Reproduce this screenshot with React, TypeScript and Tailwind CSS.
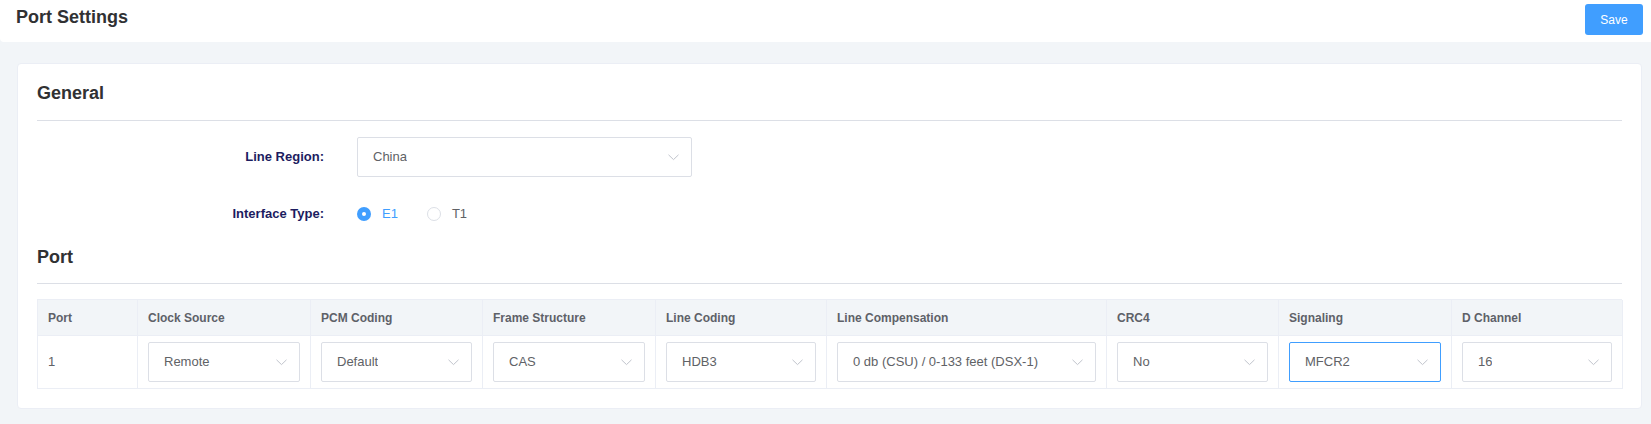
import React from 'react';

interface PortColumn {
  key: string;
  label: string;
  width: string;
  value?: string;
  focused?: boolean;
}

const columns: PortColumn[] = [
  { key: 'port', label: 'Port', width: 'w-[100px]' },
  { key: 'clock', label: 'Clock Source', width: 'w-[173px]', value: 'Remote' },
  { key: 'pcm', label: 'PCM Coding', width: 'w-[172px]', value: 'Default' },
  { key: 'frame', label: 'Frame Structure', width: 'w-[173px]', value: 'CAS' },
  { key: 'lineCoding', label: 'Line Coding', width: 'w-[171px]', value: 'HDB3' },
  { key: 'lineComp', label: 'Line Compensation', width: 'w-[280px]', value: '0 db (CSU) / 0-133 feet (DSX-1)' },
  { key: 'crc4', label: 'CRC4', width: 'w-[172px]', value: 'No' },
  { key: 'signaling', label: 'Signaling', width: 'w-[173px]', value: 'MFCR2', focused: true },
  { key: 'dchannel', label: 'D Channel', width: 'w-[171px]', value: '16' },
];

function Chevron() {
  return (
    <svg width="11" height="7" viewBox="0 0 11 7" className="shrink-0">
      <polyline points="0.5,0.8 5.5,5.6 10.5,0.8" fill="none" stroke="#c0c4cc" strokeWidth="1" />
    </svg>
  );
}

function SelectBox({ value, focused, className }: { value: string; focused?: boolean; className?: string }) {
  return (
    <div
      className={`h-[40px] flex items-center justify-between pl-[15px] pr-[12px] border rounded-[2px] bg-white text-[13px] text-[#606266] ${
        focused ? 'border-[#409eff]' : 'border-[#dcdfe6]'
      } ${className ?? ''}`}
    >
      <span className="truncate">{value}</span>
      <Chevron />
    </div>
  );
}

function Radio({ label, checked }: { label: string; checked?: boolean }) {
  return (
    <label className="flex items-center gap-[11px] text-[13px]">
      {checked ? (
        <span className="w-[14px] h-[14px] rounded-full bg-[#409eff] flex items-center justify-center">
          <span className="w-[4px] h-[4px] rounded-full bg-white" />
        </span>
      ) : (
        <span className="w-[14px] h-[14px] rounded-full border border-[#dcdfe6] bg-white" />
      )}
      <span className={checked ? 'text-[#409eff]' : 'text-[#606266]'}>{label}</span>
    </label>
  );
}

export default function App() {
  return (
    <div className="min-h-[424px] bg-[#f2f5f8] font-['Liberation_Sans',Arial,sans-serif] pb-[15px]">
      {/* Top bar */}
      <div className="h-[42px] bg-white rounded-bl-[4px] flex justify-between items-start pt-[4px] pl-[16px] pr-[8px]">
        <h1 className="mt-[1px] text-[18px] leading-[24px] font-bold text-[#303133]">Port Settings</h1>
        <button className="w-[58px] h-[31px] rounded-[3px] bg-[#409eff] text-white text-[12px]">Save</button>
      </div>

      {/* Card */}
      <div className="mt-[21px] ml-[17px] mr-[9px] bg-white border border-[#ebeef5] rounded-[4px] px-[19px] pt-[17px] pb-[19px]">
        <div className="pb-[15px] border-b border-[#dcdfe6]">
          <h2 className="text-[18px] leading-[24px] font-bold text-[#303133]">General</h2>
        </div>

        <div className="mt-[16px] flex items-center gap-[33px]">
          <div className="w-[287px] text-right text-[13px] font-bold text-[#1c1c60]">Line Region:</div>
          <SelectBox value="China" className="w-[335px]" />
        </div>

        <div className="mt-[17px] h-[40px] flex items-center gap-[33px]">
          <div className="w-[287px] text-right text-[13px] font-bold text-[#1c1c60]">Interface Type:</div>
          <div className="flex items-center gap-[29px]">
            <Radio label="E1" checked />
            <Radio label="T1" />
          </div>
        </div>

        <div className="mt-[11px] pb-[14px] border-b border-[#dcdfe6]">
          <h2 className="text-[18px] leading-[24px] font-bold text-[#303133]">Port</h2>
        </div>

        {/* Port table */}
        <div className="mt-[15px] border-t border-l border-[#ebeef5] flex flex-col">
          <div className="flex bg-[#f2f5f8]">
            {columns.map((col) => (
              <div
                key={col.key}
                className={`${col.width} h-[36px] shrink-0 flex items-center px-[10px] border-r border-b border-[#ebeef5] text-[12px] font-bold text-[#5e6168]`}
              >
                {col.label}
              </div>
            ))}
          </div>
          <div className="flex">
            {columns.map((col) => (
              <div
                key={col.key}
                className={`${col.width} h-[53px] shrink-0 flex items-center px-[10px] border-r border-b border-[#ebeef5]`}
              >
                {col.value ? (
                  <SelectBox value={col.value} focused={col.focused} className="w-full" />
                ) : (
                  <span className="text-[13px] text-[#606266]">1</span>
                )}
              </div>
            ))}
          </div>
        </div>
      </div>
    </div>
  );
}
